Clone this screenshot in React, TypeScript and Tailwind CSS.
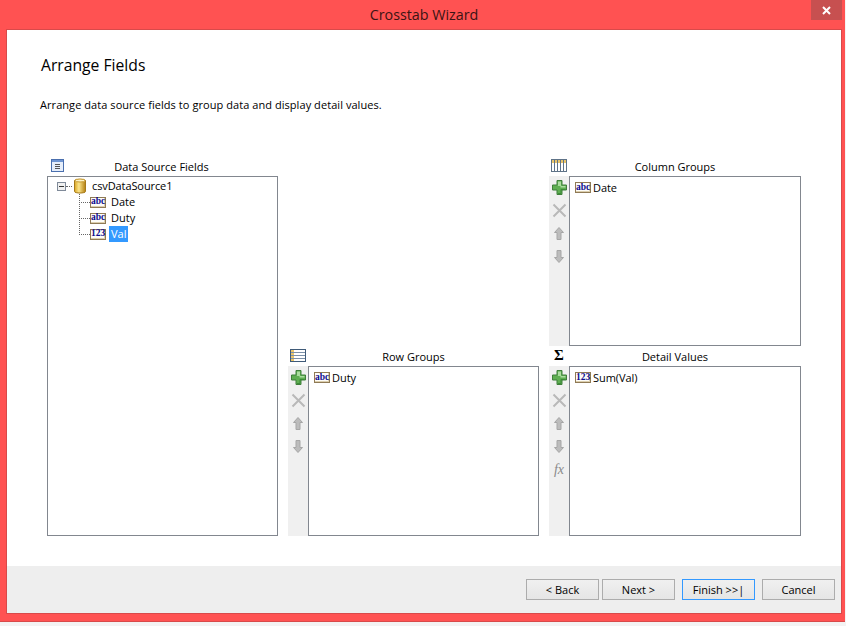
const FONT = "font-['Open_Sans',sans-serif]";

function TypeBadge({ label }: { label: string }) {
  return (
    <span className="flex h-[11px] w-[16px] shrink-0 items-center justify-center border border-[#8f7a55] bg-[#fdfcf8] font-['Liberation_Serif',serif] text-[9.500px] leading-none font-bold text-[#0b0b8f] shadow-[inset_-1px_-1px_0_#dccfae]">
      {label}
    </span>
  );
}

function PlusIcon() {
  return (
    <svg width="15" height="15" viewBox="0 0 15 15">
      <path d="M5 .5h5v4.500h4.500v5H10v4.500H5V10H.5V5H5z" fill="#5fae52" stroke="#3f7f3a" />
      <path d="M6 1.500h3v4.500h4.500v1.500H8.500V6H6z" fill="#aadc9e" />
      <path d="M6 13.500h3V9.500h4.500" fill="none" stroke="#3d8a38" />
    </svg>
  );
}

function CrossIcon() {
  return (
    <svg width="15" height="15" viewBox="0 0 15 15">
      <path d="M1.500 1.500l12 12M13.500 1.500l-12 12" stroke="#b9b9b9" strokeWidth="2" />
    </svg>
  );
}

function ArrowIcon({ down }: { down?: boolean }) {
  return (
    <svg width="10" height="13" viewBox="0 0 10 13">
      <path
        d={down ? "M3 .5h4v7h2.500L5 12.500.5 7.500H3z" : "M5 .5l4.500 5H7v7H3v-7H.5z"}
        fill="#bcbcbc"
        stroke="#a6a6a6"
      />
    </svg>
  );
}

function ListIcon() {
  return (
    <svg width="13" height="13" viewBox="0 0 13 13">
      <rect x=".5" y=".5" width="12" height="12" fill="#e6eefa" stroke="#4a6fae" />
      <rect x="1" y="1" width="11" height="2" fill="#6f95d2" />
      <path d="M4 5.500h5M4 7.500h5M4 9.500h5" stroke="#555" />
    </svg>
  );
}

function ColumnsIcon() {
  return (
    <svg width="16" height="13" viewBox="0 0 16 13">
      <rect x=".5" y=".5" width="15" height="12" fill="#fff" stroke="#5f7388" />
      <rect x="1" y="1" width="14" height="3" fill="#e8c46a" />
      <path d="M3.500 1v11M6.500 1v11M9.500 1v11M12.500 1v11" stroke="#5f7388" />
    </svg>
  );
}

function RowsIcon() {
  return (
    <svg width="16" height="13" viewBox="0 0 16 13">
      <rect x=".5" y=".5" width="15" height="12" fill="#fff" stroke="#3f5a78" />
      <rect x="1" y="1" width="3" height="11" fill="#e8c46a" />
      <path d="M1 3.500h14M1 6.500h14M1 9.500h14" stroke="#7b90a8" />
    </svg>
  );
}

function DatabaseIcon() {
  return (
    <svg width="12" height="16" viewBox="0 0 12 16">
      <defs>
        <linearGradient id="db" x1="0" x2="1" y1="0" y2="0">
          <stop offset="0" stopColor="#d9a520" />
          <stop offset=".4" stopColor="#fbe58c" />
          <stop offset="1" stopColor="#b47f10" />
        </linearGradient>
      </defs>
      <path d="M.5 2.500C.5 1 11.500 1 11.500 2.500v11c0 2-11 2-11 0z" fill="url(#db)" stroke="#a67a1a" />
      <ellipse cx="6" cy="2.500" rx="5" ry="1.500" fill="#fdf3c4" stroke="#c79a30" />
    </svg>
  );
}

function Toolbar({ fx }: { fx?: boolean }) {
  return (
    <div className="flex w-[20px] shrink-0 flex-col items-center bg-[#f0f0f0]">
      <div className="flex h-[23px] items-center"><PlusIcon /></div>
      <div className="flex h-[23px] items-center"><CrossIcon /></div>
      <div className="flex h-[23px] items-center"><ArrowIcon /></div>
      <div className="flex h-[23px] items-center"><ArrowIcon down /></div>
      {fx && (
        <div className="flex h-[23px] items-center font-['Liberation_Serif',serif] text-[14px] text-[#8a8a8a] italic">
          fx
        </div>
      )}
    </div>
  );
}

function Panel({
  icon,
  title,
  badge,
  item,
  fx,
  headerClass,
}: {
  icon: React.ReactNode;
  title: string;
  badge: string;
  item: string;
  fx?: boolean;
  headerClass: string;
}) {
  return (
    <div className="flex h-full min-h-0 flex-col">
      <div className={`flex shrink-0 items-start ${headerClass}`}>
        <div className="w-[20px] shrink-0">{icon}</div>
        <div className="flex-1 pr-[20px] text-center text-[11px] leading-[15px] text-black">{title}</div>
      </div>
      <div className="flex min-h-0 flex-1">
        <Toolbar fx={fx} />
        <div className="flex-1 border border-[#82878f] bg-white pt-[3px] pl-[5px]">
          <div className="flex items-center gap-[2px]">
            <TypeBadge label={badge} />
            <span className="text-[11px] leading-[15px] tracking-[-0.05px] text-black">{item}</span>
          </div>
        </div>
      </div>
    </div>
  );
}

function TreeRow({ label, badge, selected }: { label: string; badge: string; selected?: boolean }) {
  return (
    <div className="flex h-[16px] items-center">
      <span className="h-0 w-[11px] shrink-0 border-t border-dotted border-[#666]" />
      <TypeBadge label={badge} />
      <span
        className={`ml-[3px] px-[2px] text-[11px] leading-[16px] ${selected ? "bg-[#3399ff] text-white" : "text-black"}`}
      >
        {label}
      </span>
    </div>
  );
}

function WizardButton({ label, active }: { label: string; active?: boolean }) {
  return (
    <button
      className={`h-[21px] w-[73px] border bg-gradient-to-b from-[#f0f0f0] to-[#e5e5e5] text-[11px] leading-none text-black ${
        active ? "border-[#3399ff]" : "border-[#acacac]"
      }`}
    >
      {label}
    </button>
  );
}

export default function App() {
  return (
    <div className={`h-[626px] w-[846px] bg-[#f3f3f3] ${FONT}`}>
      <div className="flex h-[622px] w-[845px] flex-col border-b border-[#d84a4a] bg-[#ff5252]">
        <div className="relative flex h-[30px] shrink-0 items-center justify-center pl-[3px] text-[14.300px] text-[#3b1414]">
          Crosstab Wizard
          <div className="absolute top-0 right-[3px] flex h-[20px] w-[31px] items-center justify-center bg-[#c75050] text-white">
            <svg width="9" height="9" viewBox="0 0 9 9">
              <path d="M1 1l7 7M8 1l-7 7" stroke="#fff" strokeWidth="2" />
            </svg>
          </div>
        </div>
        <div className="mr-[4px] mb-[8px] ml-[7px] flex min-h-0 flex-1 flex-col bg-white shadow-[0_0_0_1px_#d84a4a]">
          <div className="flex-1 pl-[33px]">
            <h1 className="pt-[24px] pl-[1px] text-[15.700px] leading-[22px] font-medium text-black">Arrange Fields</h1>
            <p className="mt-[21px] text-[11px] leading-[15px] tracking-[0.06px] text-black">
              Arrange data source fields to group data and display detail values.
            </p>
            <div className="mt-[47px] ml-[7px] grid w-[754px] grid-cols-[231px_251px_252px] grid-rows-[187px_190px] gap-x-[10px]">
              <div className="row-span-2 flex flex-col">
                <div className="flex h-[17px] items-start">
                  <span className="ml-[4px]"><ListIcon /></span>
                  <span className="flex-1 pr-[19px] text-center text-[11px] leading-[15px] text-black">
                    Data Source Fields
                  </span>
                </div>
                <div className="flex-1 border border-[#82878f] bg-white pt-[1px] pl-[9px]">
                  <div className="flex h-[16px] items-center">
                    <span className="flex h-[9px] w-[9px] shrink-0 items-center justify-center border border-[#7f8a99] bg-[#f0f0f0]">
                      <span className="h-px w-[5px] bg-[#333]" />
                    </span>
                    <span className="h-0 w-[6px] shrink-0 border-t border-dotted border-[#666]" />
                    <span className="ml-[2px]"><DatabaseIcon /></span>
                    <span className="ml-[6px] text-[11px] leading-[16px] tracking-[-0.1px] text-black">csvDataSource1</span>
                  </div>
                  <div className="relative ml-[22px]">
                    <span className="absolute top-0 left-0 h-[41px] border-l border-dotted border-[#666]" />
                    <TreeRow label="Date" badge="abc" />
                    <TreeRow label="Duty" badge="abc" />
                    <TreeRow label="Val" badge="123" selected />
                  </div>
                </div>
              </div>
              <div className="col-start-3 row-start-1 min-h-0">
                <Panel
                  icon={<span className="block pl-[2px]"><ColumnsIcon /></span>}
                  title="Column Groups"
                  badge="abc"
                  item="Date"
                  headerClass="h-[17px]"
                />
              </div>
              <div className="col-start-2 row-start-2 min-h-0">
                <Panel
                  icon={<span className="block pl-[2px]"><RowsIcon /></span>}
                  title="Row Groups"
                  badge="abc"
                  item="Duty"
                  headerClass="h-[20px] pt-[3px]"
                />
              </div>
              <div className="col-start-3 row-start-2 min-h-0">
                <Panel
                  icon={
                    <span className="block pl-[5px] font-['Liberation_Serif',serif] text-[15px] leading-[12px] font-bold text-black">
                      Σ
                    </span>
                  }
                  title="Detail Values"
                  badge="123"
                  item="Sum(Val)"
                  fx
                  headerClass="h-[20px] pt-[3px]"
                />
              </div>
            </div>
          </div>
          <div className="flex h-[47px] shrink-0 items-start justify-end gap-[7px] bg-[#eeeeee] pt-[13px] pr-[6px]">
            <div className="flex gap-[3px]">
              <WizardButton label="< Back" />
              <WizardButton label="Next >" />
            </div>
            <WizardButton label="Finish >>|" active />
            <WizardButton label="Cancel" />
          </div>
        </div>
      </div>
    </div>
  );
}
